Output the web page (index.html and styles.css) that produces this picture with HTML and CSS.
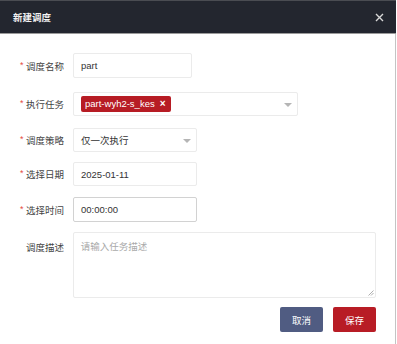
FILE: index.html
```html
<!DOCTYPE html>
<html lang="zh">
<head>
<meta charset="utf-8">
<link rel="stylesheet" href="styles.css">
</head>
<body>
<div class="dialog">
  <div class="header">
    <span class="title">新建调度</span>
    <svg class="close" width="9" height="9" viewBox="0 0 9 9"><path d="M1 1L8 8M8 1L1 8" stroke="#d8d8d8" stroke-width="1.4"/></svg>
  </div>
  <div class="form">
    <div class="row r1">
      <label class="label"><span class="star">*</span>调度名称</label>
      <div class="field w-name">part</div>
    </div>
    <div class="row r2">
      <label class="label"><span class="star">*</span>执行任务</label>
      <div class="field select w-task">
        <span class="tag">part-wyh2-s_kes<span class="tag-x">×</span></span>
        <span class="arrow"></span>
      </div>
    </div>
    <div class="row r3">
      <label class="label"><span class="star">*</span>调度策略</label>
      <div class="field select w-short">仅一次执行<span class="arrow"></span></div>
    </div>
    <div class="row r4">
      <label class="label"><span class="star">*</span>选择日期</label>
      <div class="field w-short">2025-01-11</div>
    </div>
    <div class="row r5">
      <label class="label"><span class="star">*</span>选择时间</label>
      <div class="field w-short focus">00:00:00</div>
    </div>
    <div class="row r6">
      <label class="label top">调度描述</label>
      <div class="field area">
        <span class="placeholder">请输入任务描述</span>
        <svg class="grip" width="6" height="6" viewBox="0 0 6 6"><path d="M5.5 0.5L0.5 5.5M5.5 3L3 5.5" stroke="#999" stroke-width="0.8"/></svg>
      </div>
    </div>
    <div class="actions">
      <button class="btn cancel">取消</button>
      <button class="btn save">保存</button>
    </div>
  </div>
</div>
</body>
</html>
```
FILE: styles.css
```css
html, body {
  margin: 0;
  padding: 0;
  background: #fff;
}
body {
  font-family: "Liberation Sans", "Noto Sans CJK SC", sans-serif;
  font-size: 9.5px;
  color: #333;
}
.dialog {
  width: 396px;
  height: 344px;
  box-sizing: border-box;
  border-right: 1px solid #c4c4c4;
}
.header {
  height: 32px;
  background: #23262f;
  border-top: 1px solid #4a4c52;
  border-bottom: 1px solid #9a9a9a;
  display: flex;
  align-items: center;
  justify-content: space-between;
  padding: 0 12px 0 13px;
  box-sizing: content-box;
  margin-right: -1px;
}
.title {
  color: #f2f2f2;
  font-weight: bold;
  font-size: 9.5px;
}
.close {
  display: block;
}
.form {
  padding: 19px 19px 0 0;
  display: flex;
  flex-direction: column;
}
.row {
  display: flex;
  align-items: center;
}
.r2 { margin-top: 14px; }
.r3 { margin-top: 12px; }
.r4 { margin-top: 10px; }
.r5 { margin-top: 11px; }
.r6 { margin-top: 10px; align-items: flex-start; }
.label {
  width: 73px;
  box-sizing: border-box;
  padding-left: 26px;
  position: relative;
  color: #444;
  white-space: nowrap;
}
.label.top {
  padding-top: 8px;
}
.star {
  position: absolute;
  left: 20px;
  top: 1px;
  color: #e5493f;
  font-size: 9px;
}
.field {
  height: 25px;
  box-sizing: border-box;
  border: 1px solid #ebebeb;
  border-radius: 2px;
  display: flex;
  align-items: center;
  padding-left: 7px;
  color: #333;
  position: relative;
  white-space: nowrap;
}
.w-name { width: 119px; }
.w-task { width: 225px; height: 24px; }
.w-short { width: 124px; height: 24px; }
.focus { height: 25px; border-color: #d2d2d2; }
.select .arrow {
  position: absolute;
  right: 5px;
  top: 10px;
  width: 0;
  height: 0;
  border-left: 4px solid transparent;
  border-right: 4px solid transparent;
  border-top: 4px solid #b5b5b5;
}
.tag {
  background: #b71c24;
  color: #fff;
  height: 16px;
  line-height: 16px;
  padding: 0 5px 0 4px;
  border-radius: 2px;
  font-size: 9.5px;
  display: inline-flex;
  align-items: center;
  white-space: nowrap;
}
.tag-x {
  margin-left: 5px;
  font-size: 10px;
  font-weight: bold;
}
.area {
  width: 304px;
  height: 66px;
  align-items: flex-start;
  padding-top: 6px;
}
.placeholder {
  color: #aaa;
}
.grip {
  position: absolute;
  right: 1px;
  bottom: 1px;
}
.actions {
  margin-top: 9px;
  display: flex;
  justify-content: flex-end;
  gap: 10px;
}
.btn {
  width: 43px;
  height: 25px;
  border: none;
  border-radius: 2px;
  color: #fff;
  font-family: "Liberation Sans", "Noto Sans CJK SC", sans-serif;
  font-size: 9.5px;
  padding: 0;
}
.cancel { background: #505c82; }
.save { background: #b81c25; }
```
